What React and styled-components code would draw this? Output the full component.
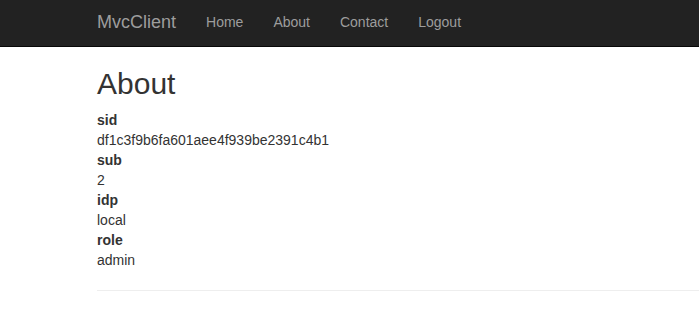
import React from 'react'
import styled, { createGlobalStyle } from 'styled-components'

const claims = [
  { type: 'sid', value: 'df1c3f9b6fa601aee4f939be2391c4b1' },
  { type: 'sub', value: '2' },
  { type: 'idp', value: 'local' },
  { type: 'role', value: 'admin' },
]

const links = ['Home', 'About', 'Contact', 'Logout']

const GlobalStyle = createGlobalStyle`
  html, body {
    margin: 0;
    padding: 0;
    background: #fff;
    overflow: hidden;
  }

  body {
    font-family: "Liberation Sans", Arial, sans-serif;
    font-size: 14px;
    line-height: 20px;
    color: #333;
  }
`

const App = () => {
  return (
    <>
      <GlobalStyle />
      <Navbar>
        <NavContainer>
          <Brand href="#">MvcClient</Brand>
          <NavList>
            {links.map((link) => (
              <NavItem key={link}>
                <NavLink href="#">{link}</NavLink>
              </NavItem>
            ))}
          </NavList>
        </NavContainer>
      </Navbar>
      <Container>
        <Title>About</Title>
        <ClaimList>
          {claims.map((claim) => (
            <React.Fragment key={claim.type}>
              <ClaimType>{claim.type}</ClaimType>
              <ClaimValue>{claim.value}</ClaimValue>
            </React.Fragment>
          ))}
        </ClaimList>
        <Rule />
      </Container>
    </>
  )
}

export default App

const Navbar = styled.nav`
  height: 46px;
  background-color: #222;
  border-bottom: 1px solid #080808;
  overflow: hidden;
`

const NavContainer = styled.div`
  display: flex;
  align-items: flex-start;
  margin-left: 82px;
  margin-top: -3px;
`

const Brand = styled.a`
  display: block;
  padding: 15px;
  font-size: 18px;
  line-height: 20px;
  color: #9d9d9d;
  text-decoration: none;
`

const NavList = styled.ul`
  display: flex;
  list-style: none;
  margin: 0;
  padding: 0;
`

const NavItem = styled.li``

const NavLink = styled.a`
  display: block;
  padding: 15px;
  line-height: 20px;
  color: #9d9d9d;
  text-decoration: none;
`

const Container = styled.div`
  margin-left: 82px;
  padding-left: 15px;
`

const Title = styled.h2`
  margin: 20px 0 10px;
  font-size: 30px;
  font-weight: 500;
  line-height: 1.1;
  color: #333;
`

const ClaimList = styled.dl`
  margin: 0 0 20px;
`

const ClaimType = styled.dt`
  font-weight: 700;
`

const ClaimValue = styled.dd`
  margin-left: 0;
`

const Rule = styled.hr`
  margin: 20px 0;
  border: 0;
  border-top: 1px solid #eee;
`
